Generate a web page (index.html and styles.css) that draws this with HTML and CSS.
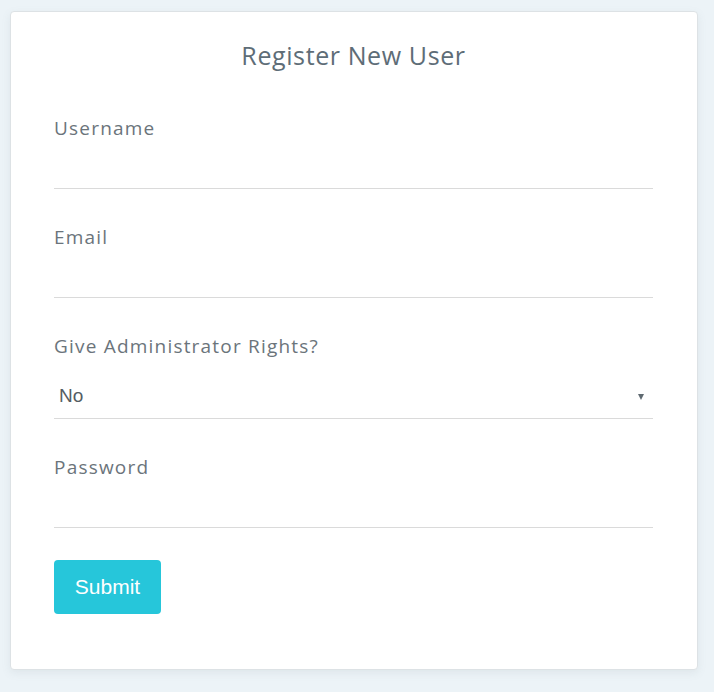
FILE: index.html
```html
<!DOCTYPE html>
<html lang="en">
<head>
<meta charset="utf-8">
<title>Register New User</title>
<link rel="stylesheet" href="styles.css">
</head>
<body>
<div class="page">
  <form class="card">
    <h2 class="title">Register New User</h2>
    <div class="group">
      <label class="label" for="username">Username</label>
      <input class="input" id="username" type="text">
    </div>
    <div class="group">
      <label class="label" for="email">Email</label>
      <input class="input" id="email" type="email">
    </div>
    <div class="group">
      <label class="label" for="admin">Give Administrator Rights?</label>
      <div class="select-wrap">
        <select class="select" id="admin">
          <option>No</option>
          <option>Yes</option>
        </select>
        <span class="arrow"></span>
      </div>
    </div>
    <div class="group last">
      <label class="label" for="password">Password</label>
      <input class="input" id="password" type="password">
    </div>
    <button class="submit" type="button">Submit</button>
  </form>
</div>
</body>
</html>
```
FILE: styles.css
```css
html, body {
  margin: 0;
  padding: 0;
  background: #ecf3f7;
}
.page {
  padding: 11px 16px 22px 10px;
}
.card {
  display: block;
  background: #ffffff;
  border: 1px solid #dde2e5;
  border-radius: 4px;
  box-shadow: 0 3px 8px rgba(120, 140, 150, 0.12);
  padding: 25px 44px 55px 43px;
  font-family: "Open Sans", "Noto Sans", sans-serif;
}
.title {
  margin: 0 0 42px 0;
  text-align: center;
  font-size: 25px;
  line-height: 36px;
  letter-spacing: 0.6px;
  font-weight: 400;
  color: #5e6d77;
}
.group {
  display: flex;
  flex-direction: column;
  margin-bottom: 35px;
}
.group.last {
  margin-bottom: 32px;
}
.label {
  font-size: 19px;
  line-height: 27px;
  letter-spacing: 1.2px;
  color: #6b747b;
}
.input {
  height: 47px;
  box-sizing: border-box;
  border: none;
  border-bottom: 1px solid #dadada;
  outline: none;
  padding: 0 6px;
  font-size: 18px;
  background: transparent;
}
.select-wrap {
  position: relative;
  margin-top: 12px;
}
.select {
  display: block;
  width: 100%;
  height: 47px;
  box-sizing: border-box;
  border: none;
  border-bottom: 1px solid #dadada;
  background: transparent;
  appearance: none;
  -webkit-appearance: none;
  padding: 0 5px;
  font-family: "Liberation Sans", Arial, sans-serif;
  font-size: 19px;
  color: #555d63;
  outline: none;
}
.arrow {
  position: absolute;
  right: 9px;
  top: 22px;
  width: 0;
  height: 0;
  border-left: 3.5px solid transparent;
  border-right: 3.5px solid transparent;
  border-top: 6px solid #5f6a71;
}
.submit {
  display: block;
  width: 107px;
  height: 54px;
  border: none;
  border-radius: 4px;
  background: #26c6da;
  color: #ffffff;
  font-family: "Liberation Sans", Arial, sans-serif;
  font-size: 21px;
}
```
